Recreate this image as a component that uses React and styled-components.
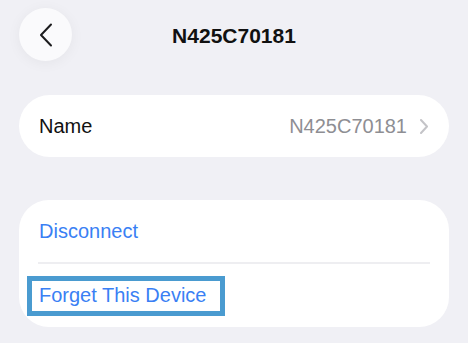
import React from "react";
import styled, { createGlobalStyle } from "styled-components";

const Global = createGlobalStyle`
  html, body { margin: 0; padding: 0; background: #f0f0f5; }
  body { font-family: "Liberation Sans", Arial, sans-serif; -webkit-font-smoothing: antialiased; }
`;

const Page = styled.div`
  width: 468px;
  height: 343px;
  overflow: hidden;
  background: #f0f0f5;
  padding: 8px 19px 0;
  box-sizing: border-box;
  display: flex;
  flex-direction: column;
`;

const Header = styled.div`
  display: grid;
  grid-template-columns: 53px 1fr 53px;
  align-items: center;
  height: 53px;
`;

const BackButton = styled.button`
  width: 53px;
  height: 53px;
  border-radius: 50%;
  border: none;
  padding: 0;
  background: #fafafc;
  box-shadow: 0 2px 14px rgba(0, 0, 0, 0.05);
  display: flex;
  align-items: center;
  justify-content: center;
`;

const Title = styled.h1`
  margin: 0;
  text-align: center;
  font-size: 21px;
  font-weight: 700;
  color: #111;
  transform: translateY(1px);
`;

const Card = styled.div`
  background: #fff;
  border-radius: ${(p) => p.$radius || 31}px;
  margin-top: ${(p) => p.$top}px;
  display: flex;
  flex-direction: column;
`;

const Row = styled.div`
  height: ${(p) => p.$h || 62}px;
  display: flex;
  align-items: center;
  padding: 0 21px 0 20px;
  font-size: 20px;
  color: ${(p) => (p.$action ? "#3a7ff4" : "#111")};
`;

const Label = styled.span`
  flex: 1;
`;

const Value = styled.span`
  color: #8e8e93;
  display: flex;
  align-items: center;
  gap: 13px;
`;

const Divider = styled.div`
  height: 2px;
  background: #eeeef1;
  margin: 0 19px 0 19px;
`;

const Highlight = styled.span`
  display: inline-block;
  border: 5px solid #4a9bd0;
  padding: 3px 14px 4px 7px;
  margin-left: -12px;
  line-height: 23px;
`;

export default function App() {
  return (
    <>
      <Global />
      <Page>
        <Header>
          <BackButton aria-label="Back">
            <svg width="14" height="24" viewBox="0 0 14 24" fill="none">
              <path d="M12 1.5 L2 12 L12 22.5" stroke="#1c1c1e" strokeWidth="2" strokeLinecap="round" strokeLinejoin="round" />
            </svg>
          </BackButton>
          <Title>N425C70181</Title>
          <span />
        </Header>
        <Card $top={34}>
          <Row>
            <Label>Name</Label>
            <Value>
              N425C70181
              <svg width="8" height="15" viewBox="0 0 8 15" fill="none">
                <path d="M1 1 L7 7.5 L1 14" stroke="#c4c4c8" strokeWidth="2" strokeLinecap="round" strokeLinejoin="round" />
              </svg>
            </Value>
          </Row>
        </Card>
        <Card $top={43} $radius={30}>
          <Row $action>Disconnect</Row>
          <Divider />
          <Row $action $h={63}>
            <Highlight>Forget This Device</Highlight>
          </Row>
        </Card>
      </Page>
    </>
  );
}
